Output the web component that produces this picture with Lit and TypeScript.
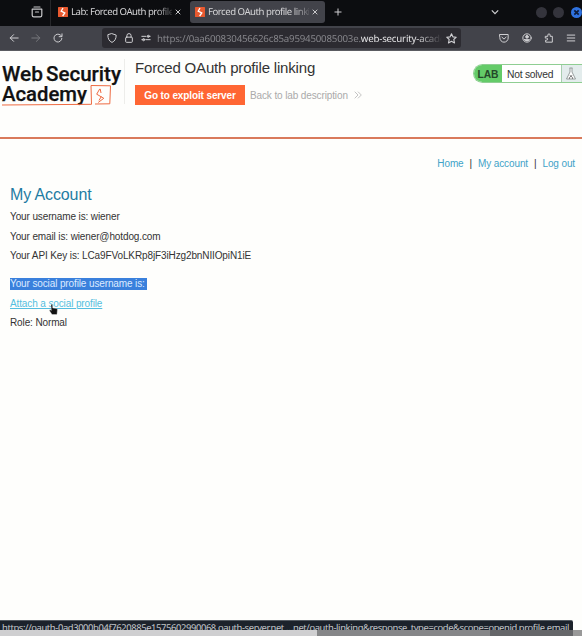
import { LitElement, html, css, svg } from 'lit';
import { customElement } from 'lit/decorators.js';

const burp = html`<svg class="fav" viewBox="0 0 10 10"><rect width="10" height="10" rx=".6" fill="#e8592f"/><path d="M5 1 3.200 4.200 6.800 6 4.600 9" fill="none" stroke="#fff" stroke-width="1.300"/></svg>`;

const icon = (cls: string, body: unknown) =>
  html`<svg class="ic ${cls}" viewBox="0 0 12 12" fill="none" stroke="currentColor" stroke-width="1.2" stroke-linecap="round" stroke-linejoin="round">${body}</svg>`;

@customElement('browser-tabs')
class BrowserTabs extends LitElement {
  static styles = css`
    :host { display: flex; position: relative; height: 26px; background: #0c0d10; color: #d6d6d8; font: 9.6px "Noto Sans", sans-serif; letter-spacing: -0.48px; overflow: hidden; }
    .ic { width: 12px; height: 12px; flex: none; }
    .view { margin: 6px 7px 0 31px; color: #c8c8ca; }
    .sep { width: 1px; margin-right: 7px; background: #26272a; }
    .fav { width: 10px; height: 10px; flex: none; margin-right: 3px; }
    .tab { display: flex; align-items: center; height: 23px; box-sizing: border-box; padding-top: 1px; flex: none; }
    .one { width: 132px; }
    .two { width: 135px; height: 22px; margin-top: 1px; padding: 0 0 0 5px; background: #42434a; border-radius: 3px; }
    .label { width: 101px; height: 14px; line-height: 14px; overflow: hidden; white-space: nowrap; -webkit-mask-image: linear-gradient(90deg, #000 84%, transparent 104%); }
    .x { width: 6px; height: 6px; margin-left: 3px; flex: none; }
    .plus { width: 8px; height: 8px; margin: 8px 0 0 9px; }
    .down { width: 8px; height: 8px; margin: 8px 0 0 149px; }
    .dots { display: flex; gap: 6.5px; margin: 6.500px 0 0 36.500px; }
    .dot { width: 11px; height: 11px; flex: none; border-radius: 50%; background: #34343c; }
    .close { background: #2f72e0; }
    .close svg { display: block; width: 11px; height: 11px; }
  `;
  render() {
    const x = html`<svg class="x" viewBox="0 0 6 6"><path d="M.7.700l4.600 4.600M5.300.7.700 5.300" stroke="#c9c9cb" stroke-width="1"/></svg>`;
    return html`
      ${icon('view', svg`<path d="M3 1h6M1.2 3.2h9.6v6a1.6 1.6 0 0 1-1.6 1.6H2.8a1.6 1.6 0 0 1-1.6-1.6zM4.5 6h3"/>`)}
      <i class="sep"></i>
      <div class="tab one">${burp}<span class="label">Lab: Forced OAuth profile</span>${x}</div>
      <div class="tab two">${burp}<span class="label">Forced OAuth profile linki</span>${x}</div>
      <svg class="plus" viewBox="0 0 8 8"><path d="M4 .5v7M.5 4h7" stroke="#cfcfd1"/></svg>
      <svg class="down" viewBox="0 0 8 8"><path d="M.8 2.3 4 5.6l3.2-3.3" fill="none" stroke="#cfcfd1" stroke-width="1.2"/></svg>
      <div class="dots"><i class="dot"></i><i class="dot"></i><i class="dot close"><svg viewBox="0 0 11 11"><path d="M3.3 3.3l4.4 4.4M7.7 3.3 3.3 7.7" stroke="#0d1c3c" stroke-width="1.7"/></svg></i></div>`;
  }
}

@customElement('browser-toolbar')
class BrowserToolbar extends LitElement {
  static styles = css`
    :host { display: flex; align-items: center; height: 25px; box-sizing: border-box; background: #42434a; color: #cfcfd2; border-bottom: 1px solid #5a5b60; font: 9.700px "Noto Sans", sans-serif; }
    .ic { width: 10px; height: 10px; flex: none; }
    .back { margin-left: 9px; }
    .fwd { margin-left: 12px; color: #77787d; }
    .reload { margin-left: 12px; }
    .field { display: flex; align-items: center; width: 359px; height: 20px; box-sizing: border-box; margin-left: 39px; padding-left: 5px; background: #2c2b31; border-radius: 3px; }
    .lock { margin-left: 7px; }
    .perm { margin-left: 7px; }
    .url { width: 285px; margin: 0 4px 0 6px; overflow: hidden; white-space: nowrap; color: #85858a; letter-spacing: -0.200px; line-height: 15px; -webkit-mask-image: linear-gradient(90deg, #000 91%, transparent); }
    .url b { font-weight: 400; color: #e4e4e6; }
    .star { width: 11px; height: 11px; }
    .pocket { margin-left: 38px; }
    .user { margin-left: 13px; }
    .ext { margin-left: 12px; }
    .menu { margin-left: 12px; }
  `;
  render() {
    return html`
      ${icon('back', svg`<path d="M11 6H1.5M5.5 2 1.5 6l4 4"/>`)}
      ${icon('fwd', svg`<path d="M1 6h9.5M6.5 2l4 4-4 4"/>`)}
      ${icon('reload', svg`<path d="M10.6 6.5A4.7 4.7 0 1 1 9 2.6L10.5 4M10.8 1v3.4H7.4"/>`)}
      <div class="field">
        ${icon('shield', svg`<path d="M6 .8 11 2.5c0 4.5-1.6 7.2-5 8.8C2.600 9.700 1 7 1 2.500z"/>`)}
        ${icon('lock', svg`<rect x="2" y="5" width="8" height="6.200" rx="1"/><path d="M3.500 5V3.200a2.500 2.500 0 0 1 5 0V5"/>`)}
        ${icon('perm', svg`<path d="M1 4h5M8 4h3M1 8h2M6 8h5"/><circle cx="8.800" cy="4" r="1.300"/><circle cx="3.200" cy="8" r="1.300"/>`)}
        <span class="url">https://0aa600830456626c85a959450085003e.<b>web-security-acade</b></span>
        ${icon('star', svg`<path d="m6 .9 1.500 3.300 3.700.4-2.700 2.500.8 3.700L6 9l-3.300 1.800.8-3.700L.8 4.600l3.700-.4z"/>`)}
      </div>
      ${icon('pocket', svg`<path d="M1 1.800h10V6a5 5 0 0 1-10 0zM3.500 5 6 7.300 8.500 5"/>`)}
      ${icon('user', svg`<circle cx="6" cy="6" r="5"/><circle cx="6" cy="4.600" r="1.600" fill="currentColor"/><path d="M3 8h6c-1 2-5 2-6 0z" fill="currentColor"/>`)}
      ${icon('ext', svg`<path d="M2 4h2.600V2.500a1.400 1.400 0 0 1 2.800 0V4H10v7H2V8.500h1.200a1.200 1.200 0 0 0 0-2.400H2z"/>`)}
      ${icon('menu', svg`<path d="M1.500 2.500h9M1.500 6h9M1.500 9.500h9"/>`)}`;
  }
}

@customElement('lab-header')
class LabHeader extends LitElement {
  static styles = css`
    :host { display: flex; height: 86px; border-bottom: 2px solid #d97a5b; font: 10px "Liberation Sans", Arial, sans-serif; letter-spacing: -0.120px; color: #333; overflow: hidden; }
    .logo { width: 124px; height: 60px; flex: none; letter-spacing: 0; }
    .logo text { font: 500 21px Roboto, sans-serif; fill: #111; stroke: #111; stroke-width: .25px; }
    .mid { padding-left: 10px; margin-top: 8px; width: 338px; height: 45px; border-left: 1px solid #ededea; box-sizing: border-box; }
    h2 { margin: 0; font-size: 15px; letter-spacing: -0.180px; font-weight: 400; line-height: 18px; white-space: nowrap; }
    .row { display: flex; align-items: center; margin-top: 8px; line-height: 21px; }
    .btn { width: 110px; height: 20px; background: #ff6633; color: #fff; font-weight: 700; text-align: center; }
    .desc { height: 20px; margin-left: 5px; color: #aaa; white-space: nowrap; }
    .chev { width: 8px; height: 8px; margin-left: 6px; }
    .status { display: flex; height: 19px; width: 109px; box-sizing: border-box; margin: 13px 0 0 11px; flex: none; border: 1px solid #8fce92; border-right: 0; border-radius: 10px 0 0 10px; overflow: hidden; font-size: 10.300px; line-height: 19px; background: #fff; }
    .lab { width: 28px; text-align: center; background: #64cb68; font-weight: 700; color: #24482a; }
    .ns { width: 59px; box-sizing: border-box; padding-left: 5px; letter-spacing: -0.250px; white-space: nowrap; }
    .flask { flex: 1; background: #e3ecec; border-left: 1px solid #a9cdb0; }
    .flask svg { display: block; width: 12px; height: 14px; margin: 2px 0 0 3px; }
  `;
  render() {
    return html`
      <svg class="logo" viewBox="0 0 124 60">
        <text x="2" y="30" textLength="41" lengthAdjust="spacingAndGlyphs">Web</text>
        <text x="46" y="30" textLength="75" lengthAdjust="spacingAndGlyphs">Security</text>
        <text x="2" y="50" textLength="85" lengthAdjust="spacingAndGlyphs">Academy</text>
        <path d="M2 54 91.500 53.300 91 34.500 110.500 34.800 109.800 52.800 95 53" fill="none" stroke="#ee6b42"/>
        <path d="M99.800 37.800 96.700 43.200 103.800 47.300 98.200 51.500M100.200 38 101 42M101.300 45.500 99 49.500" fill="none" stroke="#ee6b42"/>
      </svg>
      <div class="mid">
        <h2>Forced OAuth profile linking</h2>
        <div class="row"><span class="btn">Go to exploit server</span><span class="desc">Back to lab description</span>
          <svg class="chev" viewBox="0 0 8 8"><path d="M.7.700 4 4 .7 7.300M4 .7 7.300 4 4 7.300" fill="none" stroke="#b5b5b5" stroke-width=".8"/></svg></div>
      </div>
      <div class="status"><span class="lab">LAB</span><span class="ns">Not solved</span>
        <span class="flask"><svg viewBox="0 0 12 14"><path d="M4.500 1h3M5 1v4L1.500 12h9L7 5V1" fill="#fff" stroke="#8d9494" stroke-width=".9"/><path d="M4.500 8.500h3L6 10.500z" fill="#555"/><circle cx="4.500" cy="11" r=".7" fill="#555"/><circle cx="7.500" cy="11" r=".7" fill="#555"/></svg></span></div>`;
  }
}

@customElement('account-page')
class AccountPage extends LitElement {
  static styles = css`
    :host { display: block; font: 10px/12px "Liberation Sans", Arial, sans-serif; letter-spacing: -0.120px; color: #333; }
    nav { display: flex; justify-content: flex-end; gap: 6px; padding: 19px 7px 0 0; }
    a { color: #3fa3c8; }
    main { padding-left: 10px; }
    h1 { margin: 16px 0 3px; font-size: 16px; line-height: 18px; font-weight: 400; color: #1e7ca3; }
    p { margin: 0; height: 19.500px; line-height: 19.500px; white-space: nowrap; }
    .social { margin-top: 8px; height: 20px; }
    mark { background: #3a80dc; color: #dceaff; padding: 0 2px 1px 0; }
    .attach { position: relative; height: 19.500px; }
    .attach a { text-decoration: underline; color: #55bfe0; }
    .hand { position: absolute; left: 39px; top: 10px; width: 9px; height: 11px; }
  `;
  render() {
    return html`
      <nav><a>Home</a><span>|</span><a>My account</a><span>|</span><a>Log out</a></nav>
      <main>
        <h1>My Account</h1>
        <p>Your username is: wiener</p>
        <p>Your email is: wiener@hotdog.com</p>
        <p>Your API Key is: LCa9FVoLKRp8jF3iHzg2bnNIIOpiN1iE</p>
        <p class="social"><mark>Your social profile username is:</mark></p>
        <p class="attach"><a>Attach a social profile</a>
          <svg class="hand" viewBox="0 0 9 11"><path d="M2 1c0-1 1.400-1 1.500 0l.3 3 3.700.5c.8.200 1 .8.900 1.500L8 10.500H3L.7 7C.2 6.200 1 5.600 1.700 6l.6.5z" fill="#111" stroke="#e8e8e8" stroke-width=".4"/></svg></p>
        <p>Role: Normal</p>
      </main>`;
  }
}

@customElement('app-root')
class AppRoot extends LitElement {
  static styles = css`
    :host { display: block; position: relative; width: 582px; height: 636px; overflow: hidden; background: #fefefc; }
    browser-tabs, browser-toolbar, .link { text-rendering: geometricPrecision; }
    .link { position: absolute; left: 0; top: 620px; width: 573px; height: 16px; box-sizing: border-box; padding: 0 4px 0 2px; display: flex; justify-content: space-between; background: #1c222b; border-top: 1px solid #555b62; border-radius: 0 2px 0 0; font: 9.400px/14px "Noto Sans", sans-serif; letter-spacing: -0.380px; color: #c5c8cc; white-space: nowrap; }
    .progress { position: absolute; left: 0; top: 630px; width: 582px; height: 6px; display: flex; }
    .played { width: 317px; background: #cfcfd1; }
    .loaded { width: 173px; background: #858688; }
    .rest { flex: 1; background: #656669; }
    .end { width: 9px; background: #999; }
  `;
  render() {
    return html`
      <browser-tabs></browser-tabs>
      <browser-toolbar></browser-toolbar>
      <lab-header></lab-header>
      <account-page></account-page>
      <div class="link"><span>https://oauth-0ad3000b04f7620885e1575602990068.oauth-server.net</span><span>…net/oauth-linking&amp;response_type=code&amp;scope=openid profile email</span></div>
      <div class="progress"><i class="played"></i><i class="loaded"></i><i class="rest"></i><i class="end"></i></div>`;
  }
}
